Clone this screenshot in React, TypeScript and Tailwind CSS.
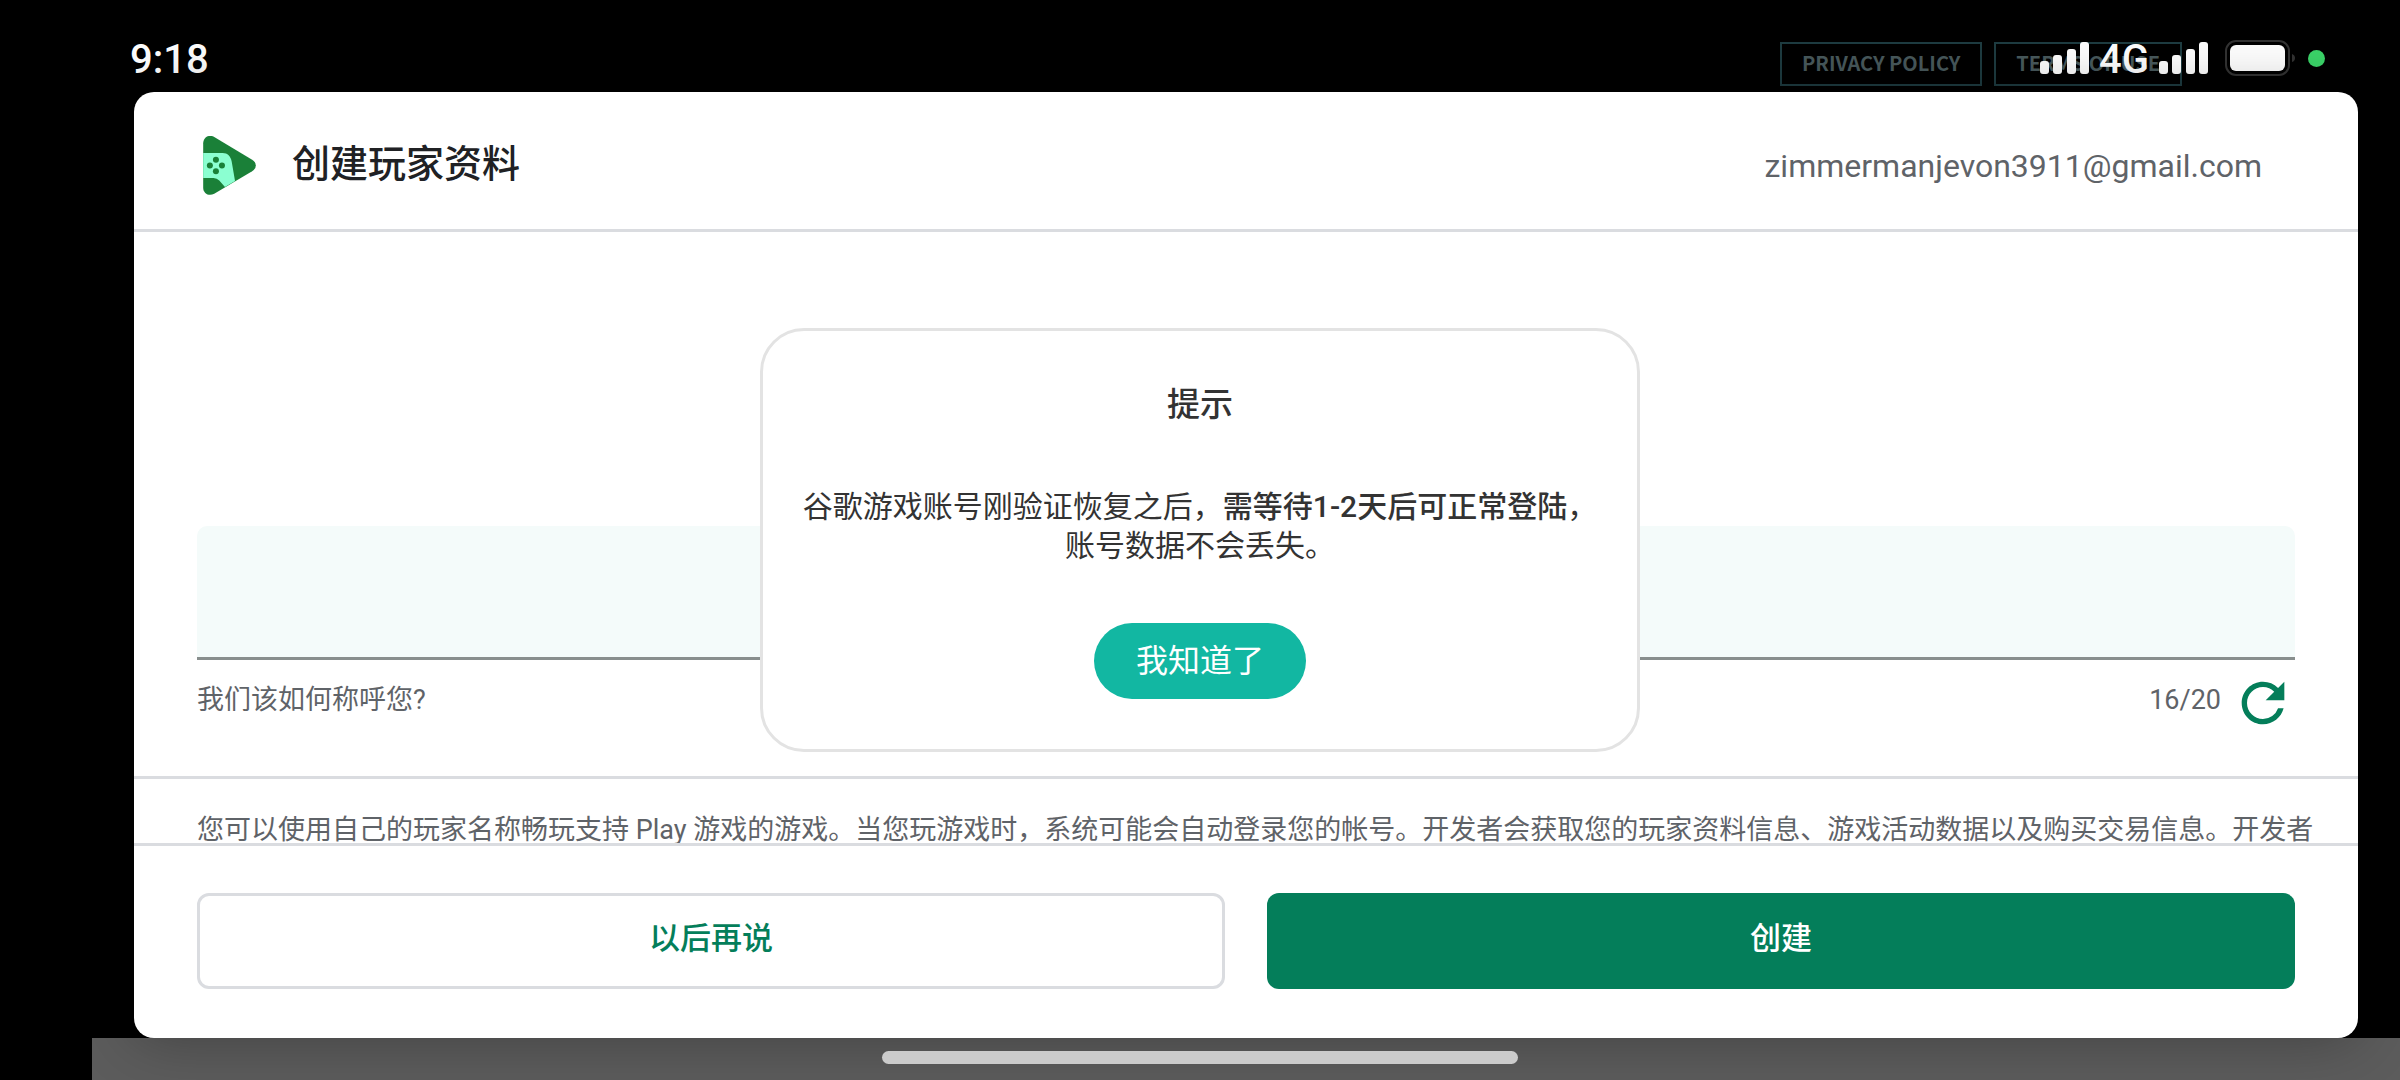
import { MdRefresh } from "react-icons/md";

function GamesLogo() {
  return (
    <svg viewBox="310 408 157 176" className="w-[53px] h-[59px]" aria-hidden="true">
      <path
        fill="#1a8038"
        d="M310 430C310 412 327 402 343 411L456 479Q467 486 467 496Q467 506 456 513L343 580C327 589 310 579 310 562Z"
      />
      <path
        fill="#8bffd1"
        d="M310 459H368C383 459 392 469 395 484L405 542L375 560L358 541Q351 533 341 533H310Z"
      />
      <g fill="#1a8038">
        <circle cx="348" cy="479" r="9" />
        <circle cx="330" cy="496" r="9" />
        <circle cx="366" cy="496" r="9" />
        <circle cx="348" cy="513" r="9" />
      </g>
    </svg>
  );
}

function Signal() {
  return (
    <svg viewBox="0 0 49 32" className="w-[49px] h-8" fill="white" aria-hidden="true">
      <rect x="0" y="19" width="9" height="13" rx="3" />
      <rect x="13" y="13" width="9" height="19" rx="3" />
      <rect x="27" y="7" width="9" height="25" rx="3" />
      <rect x="40" y="0" width="9" height="32" rx="3" />
    </svg>
  );
}

function Battery() {
  return (
    <svg viewBox="0 0 71 36" className="w-[71px] h-9" aria-hidden="true">
      <rect x="1" y="1" width="63" height="34" rx="10" fill="none" stroke="#333" strokeWidth="2" />
      <rect x="5" y="5" width="55" height="26" rx="6" fill="white" />
      <path d="M67 14Q70 15 70 18Q70 21 67 22Z" fill="#333" />
    </svg>
  );
}

export default function App() {
  return (
    <div className="relative min-h-screen flex flex-col bg-black font-['Roboto','Noto_Sans_CJK_SC',sans-serif]">
      <nav className="absolute top-[42px] right-[218px] flex gap-3 font-['Noto_Sans_CJK_SC',sans-serif] text-[20px] font-bold text-[#48595c]">
        <a href="#" className="h-11 px-5 leading-[38px] border-2 border-[#1e3c41]">PRIVACY POLICY</a>
        <a href="#" className="h-11 px-5 leading-[38px] border-2 border-[#1e3c41]">TERMS OF USE</a>
      </nav>

      <header className="relative h-[92px] pt-6 pl-[130px] pr-[75px] flex items-center justify-between text-white text-[40px] leading-none font-medium">
        <span className="pt-1">9:18</span>
        <div className="flex items-center">
          <Signal />
          <span className="px-[10px] pt-1">4G</span>
          <Signal />
          <div className="pl-[17px] pr-3">
            <Battery />
          </div>
          <span className="size-[17px] rounded-full bg-[#3bd569]"></span>
        </div>
      </header>

      <main className="relative z-10 flex-1 flex flex-col ml-[134px] mr-[42px] bg-white rounded-[20px] text-[#5f6368] shadow-[0_0_60px_rgba(0,0,0,0.3)]">
        <div className="h-[140px] pt-[10px] pl-[69px] pr-24 flex items-center justify-between border-b-3 border-[#dadce0]">
          <div className="flex items-center gap-9">
            <GamesLogo />
            <h1 className="text-[38px] leading-none pb-1 font-medium text-[#202124]">创建玩家资料</h1>
          </div>
          <span className="text-[32px]">zimmermanjevon3911@gmail.com</span>
        </div>

        <section className="flex-1 flex flex-col justify-end px-[63px] pb-[41px]">
          <input
            id="player-name"
            type="text"
            className="w-full h-[134px] px-8 text-[32px] bg-[#f4fbfa] border-b-3 border-[#888e8d] rounded-t-[10px] outline-none"
          />
          <div className="flex justify-between pt-[11px] text-[27px] leading-[58px]">
            <label htmlFor="player-name">我们该如何称呼您?</label>
            <div className="flex gap-[10px]">
              <span>16/20</span>
              <button type="button" aria-label="刷新" className="size-16 text-[#047e5a]">
                <MdRefresh size={64} />
              </button>
            </div>
          </div>
        </section>

        <p className="h-[67px] pt-[35px] pl-[63px] border-t-3 border-[#dadce0] text-[27px] leading-8 whitespace-nowrap">
          您可以使用自己的玩家名称畅玩支持 Play 游戏的游戏。当您玩游戏时，系统可能会自动登录您的帐号。开发者会获取您的玩家资料信息、游戏活动数据以及购买交易信息。开发者
        </p>

        <div className="grid grid-cols-2 gap-[42px] px-[63px] pt-[47px] pb-[49px] border-t-3 border-[#dadce0] text-[31px] font-medium">
          <button type="button" className="h-24 pb-1 rounded-xl border-3 border-[#dadce0] text-[#047e5a]">
            以后再说
          </button>
          <button type="button" className="h-24 pb-1 rounded-xl bg-[#047e5a] text-white">
            创建
          </button>
        </div>
      </main>

      <footer className="h-[42px] ml-[92px] bg-[#5c5c5c]"></footer>
      <div className="absolute z-20 inset-x-0 bottom-4 flex justify-center">
        <div className="w-[636px] h-[13px] rounded-full bg-[#cbcbcb]"></div>
      </div>

      <div className="fixed z-30 inset-0 flex items-center justify-center">
        <div
          role="dialog"
          aria-labelledby="tip-title"
          className="w-[880px] px-8 py-[50px] flex flex-col items-center gap-[58px] bg-white border-3 border-[#e3e3e3] rounded-[44px] text-[#333]"
        >
          <h2 id="tip-title" className="text-[33px] leading-12 font-medium">提示</h2>
          <p className="text-[30px] leading-[39px] text-center">
            谷歌游戏账号刚验证恢复之后，<span className="font-medium">需等待1-2天后可正常登陆</span>，
            <br />
            账号数据不会丢失。
          </p>
          <button type="button" className="h-[76px] px-[42px] rounded-full bg-[#12b7a2] text-white text-[32px]">
            我知道了
          </button>
        </div>
      </div>
    </div>
  );
}
